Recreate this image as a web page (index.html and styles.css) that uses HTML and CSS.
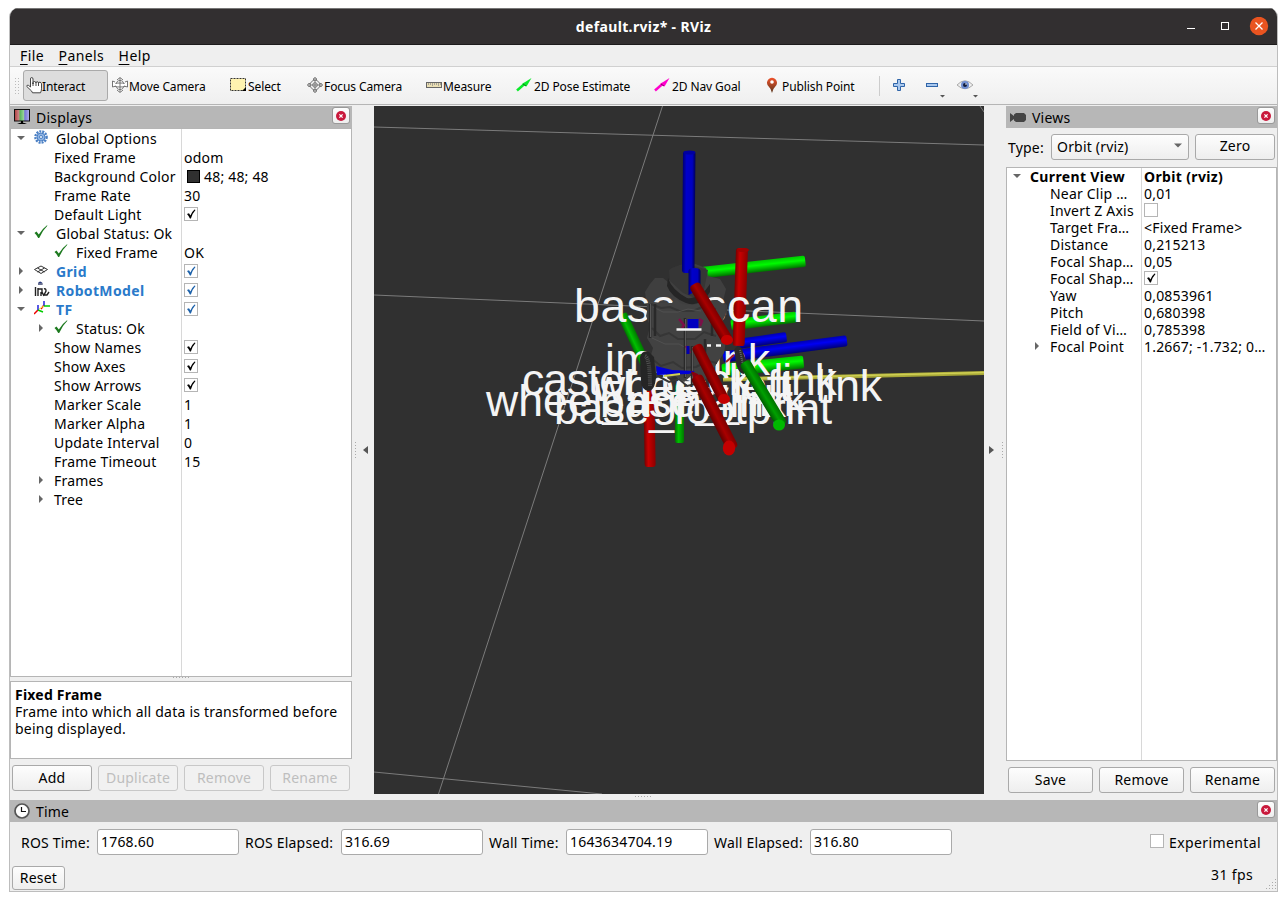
FILE: index.html
```html
<!DOCTYPE html>
<html lang="en">
<head>
<meta charset="utf-8">
<title>default.rviz* - RViz</title>
<link rel="stylesheet" href="styles.css">
</head>
<body>
<svg class="defs" width="0" height="0">
  <defs>
    <symbol id="close" viewBox="0 0 10 10"><circle cx="5" cy="5" r="5" fill="#c9193c"/><path d="M3.4 3.4l3.2 3.2M6.6 3.4L3.4 6.6" stroke="#fff" stroke-width="1.3"/></symbol>
    <symbol id="ok" viewBox="0 0 14 14"><path d="M.5 8L2.500 6.500 4.800 9.600Q8 4 13 .3l.4.5Q8.500 5.500 5.200 13H4.200Q2.800 10 .5 8z" fill="#1d7a1f"/></symbol>
    <symbol id="tick" viewBox="0 0 10 10"><path d="M1 5l2-.8L4.400 6.500Q6 2.500 8.500.5l1 .4Q6.500 4 4.900 9.500H3.900Q2.600 6.500 1 5z" fill="currentColor"/></symbol>
    <linearGradient id="pinfill" x2="0" y2="1"><stop offset="0" stop-color="#f0522b"/><stop offset="1" stop-color="#56351c"/></linearGradient>
    <linearGradient id="screen"><stop offset="0" stop-color="#b33c3c"/><stop offset=".3" stop-color="#c98989"/><stop offset=".36" stop-color="#57b35c"/><stop offset=".63" stop-color="#9ad69c"/><stop offset=".68" stop-color="#7474d8"/><stop offset="1" stop-color="#b2b2ea"/></linearGradient>
  </defs>
</svg>
<div class="window">
  <header class="titlebar">
    <h1>default.rviz* - RViz</h1>
    <svg class="wincontrols" width="88" height="20">
      <path d="M4 11.500h8" stroke="#fff"/><rect x="38.500" y="5.500" width="7" height="7" fill="none" stroke="#fff"/>
      <circle cx="76" cy="9" r="9.200" fill="#e95420"/><path d="M72.500 5.500l7 7M79.500 5.500l-7 7" stroke="#fff" stroke-width="1.300"/>
    </svg>
  </header>
  <nav class="menubar"><span class="m1"><u>F</u>ile</span><span class="m2"><u>P</u>anels</span><span class="m3"><u>H</u>elp</span></nav>
  <div class="toolbar">
    <i class="grip"></i>
    <div class="tool active"><svg width="17" height="17"><path d="M4.500 10V2q0-1.500 1.200-1.500T7 2v5V5.500q.2-1 1.500-1T10 6q0-1.300 1.200-1.300T12.500 6q.2-1 1.500-.8t1.500 1.600v5q0 2-1 4h-8Q6 14 4 12.500L.8 9.500Q.8 7.500 2.500 8.400L4.500 10M7 6v3M10 6v3M12.500 6v3" fill="#fff" stroke="#333" stroke-width=".9"/></svg><span>Interact</span></div>
    <div class="tool t2"><svg width="17" height="17"><g fill="#fff" stroke="#666" stroke-width=".9"><ellipse cx="8" cy="8" rx="3.700" ry="4.500"/><ellipse cx="8" cy="8" rx="7" ry="2"/><path d="M8 1v14M5 3l3-2.500L11 3M5 13l3 2.500 3-2.500M3 5L.5 4v6L4 9M13 5l2.500-1v6L12 9"/></g></svg><span>Move Camera</span></div>
    <div class="tool t3"><svg width="17" height="17"><rect x=".5" y="1.500" width="15" height="12" fill="#fff3b0" stroke="#333" stroke-dasharray="2 1"/><path d="M16 10v4h-4z"/></svg><span>Select</span></div>
    <div class="tool t4"><svg width="17" height="17"><g fill="none" stroke="#777"><circle cx="8" cy="8" r="4.800"/><circle cx="8" cy="8" r="2.300"/><path d="M8 1v14M1 8h14M6.500 3V1.500L8 .5l1.500 1V3M6.500 13v1.500l1.500 1 1.500-1V13M3 6.500H1.500L.5 8l1 1.500H3M13 6.500h1.500l1 1.500-1 1.500H13"/></g></svg><span>Focus Camera</span></div>
    <div class="tool t5"><svg width="17" height="17"><rect x=".5" y="5.500" width="15" height="5" fill="#eadfb4" stroke="#666"/><path d="M2.500 6v2M4.500 6v2M6.500 6v3M8.500 6v2M10.500 6v2M12.500 6v3M14.500 6v2" stroke="#888" stroke-width=".7"/></svg><span>Measure</span></div>
    <div class="tool t6"><svg width="17" height="17"><path d="M1 13.500L9 6.500" stroke="#0bea2b" stroke-width="2.500"/><path d="M6 7l9.500-6-5 8.500z" fill="#0bea2b"/><path d="M7 7l3 2" stroke="#08781b"/></svg><span>2D Pose Estimate</span></div>
    <div class="tool t7"><svg width="17" height="17"><path d="M1 13.500L9 6.500" stroke="#f0c" stroke-width="2.500"/><path d="M6 7l9.500-6-5 8.500z" fill="#f0c"/><path d="M7 7l3 2" stroke="#800568"/></svg><span>2D Nav Goal</span></div>
    <div class="tool t8"><svg width="12" height="17"><path d="M6 16Q5 11.500 1.500 8A5 5 0 1 1 10.500 8Q7 11.500 6 16z" fill="url(#pinfill)"/><circle cx="6" cy="5" r="1.800" fill="#fff"/></svg><span>Publish Point</span></div>
    <svg class="extras" width="110" height="30">
      <path d="M.5 5v20" stroke="#ccc"/><path d="M18.500 8.500h3v4h4v3h-4v4h-3v-4h-4v-3h4z" fill="#a9c8ee" stroke="#2f64a8"/>
      <rect x="47.500" y="12.500" width="11" height="3" fill="#a9c8ee" stroke="#2f64a8"/><path d="M61 24h5l-2.500 2.500zM94 24h5l-2.500 2.500z" fill="#555"/>
      <path d="M78 14Q86 5.500 94 14Q86 21.500 78 14z" fill="#eee" stroke="#aaa"/><circle cx="86" cy="14" r="4" fill="#6e8dd0"/><circle cx="86" cy="14" r="2" fill="#111b3a"/><circle cx="87" cy="13" r=".8" fill="#fff"/>
    </svg>
  </div>
  <main class="workspace">
    <section class="displays">
      <div class="docktitle"><svg width="17" height="17"><rect x=".5" y=".5" width="15" height="11.500" fill="url(#screen)" stroke="#111"/><path d="M7 12h2v2H7zM3 15q5-3 10 0z"/></svg><span>Displays</span><button class="close"><svg width="10" height="10"><use href="#close"/></svg></button></div>
      <div class="tree">
        <div class="row"><div class="name l1"><i class="exp open"></i><svg width="14" height="14"><circle cx="7" cy="7" r="5.600" fill="none" stroke="#4a7fc4" stroke-width="2.400" stroke-dasharray="2 1"/><circle cx="7" cy="7" r="4" fill="#8fb4e3" stroke="#4a7fc4"/><circle cx="7" cy="7" r="1.500" fill="#fff" stroke="#4a7fc4"/></svg><span>Global Options</span></div><div class="value"></div></div>
        <div class="row"><div class="name p">Fixed Frame</div><div class="value">odom</div></div>
        <div class="row"><div class="name p">Background Color</div><div class="value"><i class="swatch"></i>48; 48; 48</div></div>
        <div class="row"><div class="name p">Frame Rate</div><div class="value">30</div></div>
        <div class="row"><div class="name p">Default Light</div><div class="value"><i class="check"><svg width="10" height="10"><use href="#tick"/></svg></i></div></div>
        <div class="row"><div class="name l1"><i class="exp open"></i><svg width="14" height="14"><use href="#ok"/></svg><span>Global Status: Ok</span></div><div class="value"></div></div>
        <div class="row"><div class="name l2"><i class="exp none"></i><svg width="14" height="14"><use href="#ok"/></svg><span>Fixed Frame</span></div><div class="value">OK</div></div>
        <div class="row"><div class="name l1 display"><i class="exp"></i><svg width="14" height="14"><path d="M.5 6.500L7 3l6.500 3.500L7 10.500zM3.500 5l7 4M10.500 5l-7 4" fill="none" stroke="#333"/></svg><span>Grid</span></div><div class="value"><i class="check blue"><svg width="10" height="10"><use href="#tick"/></svg></i></div></div>
        <div class="row"><div class="name l1 display"><i class="exp"></i><svg class="robot" width="16" height="17"><path d="M4 2q2-3 4.500 0v2H4z" fill="#28397c"/><path d="M4 3h5" stroke="#aaa"/><path d="M1.500 6v9M4 7v8M4 8h4v3l2 4M7 15v-4M10 8q2-1 2 2l-2 4h3l2-3" fill="none" stroke="#222" stroke-width="1.400"/></svg><span>RobotModel</span></div><div class="value"><i class="check blue"><svg width="10" height="10"><use href="#tick"/></svg></i></div></div>
        <div class="row"><div class="name l1 display"><i class="exp open"></i><svg class="robot" width="16" height="16"><path d="M0 14l4-4M7 9l3-4" stroke="#e00" stroke-width="1.500"/><path d="M4 10V5M10 6V1" stroke="#22d" stroke-width="1.500"/><path d="M4 10l5 2M10 6h6" stroke="#0c0" stroke-width="1.500"/><path d="M5 9l5-3" stroke="#ee4"/></svg><span>TF</span></div><div class="value"><i class="check blue"><svg width="10" height="10"><use href="#tick"/></svg></i></div></div>
        <div class="row"><div class="name l2"><i class="exp"></i><svg width="14" height="14"><use href="#ok"/></svg><span>Status: Ok</span></div><div class="value"></div></div>
        <div class="row"><div class="name p">Show Names</div><div class="value"><i class="check"><svg width="10" height="10"><use href="#tick"/></svg></i></div></div>
        <div class="row"><div class="name p">Show Axes</div><div class="value"><i class="check"><svg width="10" height="10"><use href="#tick"/></svg></i></div></div>
        <div class="row"><div class="name p">Show Arrows</div><div class="value"><i class="check"><svg width="10" height="10"><use href="#tick"/></svg></i></div></div>
        <div class="row"><div class="name p">Marker Scale</div><div class="value">1</div></div>
        <div class="row"><div class="name p">Marker Alpha</div><div class="value">1</div></div>
        <div class="row"><div class="name p">Update Interval</div><div class="value">0</div></div>
        <div class="row"><div class="name p">Frame Timeout</div><div class="value">15</div></div>
        <div class="row"><div class="name l2 plain"><i class="exp"></i><span>Frames</span></div><div class="value"></div></div>
        <div class="row"><div class="name l2 plain"><i class="exp"></i><span>Tree</span></div><div class="value"></div></div>
        <div class="row fill"><div class="name"></div></div>
      </div>
      <div class="hsplit"><i></i></div>
      <div class="description"><b>Fixed Frame</b><br>Frame into which all data is transformed before<br>being displayed.</div>
      <div class="buttons"><button>Add</button><button disabled>Duplicate</button><button disabled>Remove</button><button disabled>Rename</button></div>
    </section>
    <div class="vsplit"><i class="dots"></i><i class="arrow left"></i></div>
    <svg class="viewport" width="610" height="688" viewBox="374 106 610 688">
      <defs>
        <linearGradient id="blueV"><stop offset="0" stop-color="#000070"/><stop offset=".3" stop-color="#0000cb"/><stop offset=".75" stop-color="#0000c0"/><stop offset="1" stop-color="#000058"/></linearGradient>
        <linearGradient id="redV"><stop offset="0" stop-color="#780000"/><stop offset=".35" stop-color="#c80000"/><stop offset="1" stop-color="#8b0000"/></linearGradient>
        <linearGradient id="redArm"><stop offset="0" stop-color="#640000"/><stop offset=".5" stop-color="#a80000"/><stop offset="1" stop-color="#7c0000"/></linearGradient>
        <linearGradient id="greenV"><stop offset="0" stop-color="#007000"/><stop offset=".4" stop-color="#00c000"/><stop offset="1" stop-color="#007800"/></linearGradient>
        <linearGradient id="greenArm"><stop offset="0" stop-color="#005c00"/><stop offset=".5" stop-color="#00a000"/><stop offset="1" stop-color="#007000"/></linearGradient>
        <linearGradient id="greenH" x2="0" y2="1"><stop offset="0" stop-color="#00c800"/><stop offset=".4" stop-color="#00fa00"/><stop offset="1" stop-color="#007000"/></linearGradient>
        <linearGradient id="blueH" x2="0" y2="1"><stop offset="0" stop-color="#0000b0"/><stop offset=".4" stop-color="#0000f4"/><stop offset="1" stop-color="#000078"/></linearGradient>
      </defs>
      <rect x="374" y="106" width="610" height="688" fill="#303030"/>
      <g fill="none" stroke="#838383" stroke-width=".9"><path d="M374 127L984 145M374 295L984 321M662.500 106L438.500 794M374 772L602 794M980 106l4 6"/></g>
      <g>
        <rect x="0" y="-6" width="104" height="11.500" rx="2" fill="url(#greenH)" transform="translate(702 273) rotate(-6.400)"/>
        <rect x="0" y="-5.500" width="66" height="11" rx="2" fill="url(#greenH)" transform="translate(731 325) rotate(-7)"/>
        <rect x="0" y="-5" width="50" height="10" rx="2" fill="url(#blueH)" transform="translate(737 344) rotate(-8)"/>
        <rect x="0" y="-5.500" width="125" height="11" rx="2" fill="url(#blueH)" transform="translate(723 357) rotate(-7.500)"/>
        <rect x="0" y="-6" width="82" height="13" rx="2" fill="url(#greenH)" transform="translate(722 370) rotate(-6)"/>
        <path d="M723 379.500L984 373" stroke="#a8a838" stroke-width="4"/><path d="M723 379L984 372.500" stroke="#cece52" stroke-width="1.500"/>
        <rect x="675" y="384" width="9" height="59" rx="2" fill="url(#greenV)"/>
        <rect x="643" y="370" width="11" height="97" rx="3" fill="url(#redV)" transform="rotate(-1 649 370)"/>
        <rect x="-5" y="0" width="10" height="70" rx="2" fill="url(#greenV)" transform="translate(622 314) rotate(-25)"/>
        <rect x="736" y="248" width="12" height="98" rx="3" fill="url(#redV)" transform="rotate(2 742 248)"/><ellipse cx="743" cy="250" rx="6" ry="2" fill="#a00000"/>
      </g>
      <path d="M645 292l5-8 5-6h8l5 4 5-7 5-9 12-4 16 6 2 8 12 3 6 10-3 12 4 4v10h-79z" fill="#3f3f3f"/>
      <path d="M669 270q9-7 25-4l14 4-4 20-9 8-12-5-13-12z" fill="#363636"/><path d="M668 278q4 12 19 20 13 2 23-14v8q-9 16-24 11-15-6-19-17z" fill="#252525"/>
      <g class="labels">
        <text class="scan" x="574" y="322" textLength="229">base_scan</text>
        <text x="605" y="375" textLength="165">imu_link</text>
        <text x="522" y="395" textLength="315">caster_back_link</text>
        <text x="593" y="401" textLength="289">wheel_left_link</text>
        <text x="486" y="416" textLength="320">wheel_right_link</text>
        <text x="600" y="417" textLength="186">base_link</text>
        <text x="554" y="424" textLength="278">base_footprint</text>
      </g>
      <g>
        <path d="M648 302h6l8 1h10l3-5 7 6 12 1 10-4 13-1 8 5v11l-4 8v10l5 7-2 12-7 10-9 15-9 4-8-6-7 6-9-6-7 3-4-8-9 1-6-10 4-14-6-10 3-12-4-10 3-13z" fill="#424242"/>
        <path d="M651 304l10 4 9-1 9 4h14l9-4 14 2M652 328l8 8 9-3 9 6h17l9-7 12 4M651 358l10 8 12-4 9 6 14-1 12-6 9 2M656 375l13 7 10-3 8 7 13-3 12-7" fill="none" stroke="#363636" stroke-width="2"/>
        <path d="M653 307l10 5h15l10-3 13 2M652 338l13 6h14l9 5" fill="none" stroke="#505050"/>
        <path d="M685 318v60M692 346v39M650 304v34M655 304v32M712 306v30M705 339v28" stroke="#292929" stroke-width="2.500"/><path d="M685.500 319v58M692.500 347v37M650.500 304v33" stroke="#585858"/>
        <path d="M679 319l5 6-2 3M686 346l4 7M699 319l3 2-2 5" fill="none" stroke="#7c1048" stroke-width="2.500"/>
        <path d="M693 319v10" stroke="#0000c0" stroke-width="11"/><path d="M688 346v8" stroke="#0000b0" stroke-width="3"/>
        <path d="M656 366l16 4 23 1-6 3-32 1z" fill="#0000d5"/><path d="M664 376l16-2" stroke="#d0d052" stroke-width="2"/>
        <path d="M640 357q2-7 9-5l5 5 2 20q-1 14-8 14-7-2-7-10z" fill="#252525"/><path d="M645 356q5 2 5 31" stroke="#505050" stroke-width="4" stroke-dasharray="1 1" fill="none"/>
        <path d="M734 350q6-10 10 5l4 11-4 8q-8-1-9-20" fill="#292929"/><path d="M740 350l4 20" stroke="#666" stroke-width="2" stroke-dasharray="1 1"/>
        <path d="M726 362l8-7" stroke="#a52020" stroke-width="2"/>
      </g>
      <path d="M676.500 329.500h25M707 345.500h4M716 345.500h5" stroke="#f4f4f4" stroke-width="2.500"/>
      <g>
        <rect x="683" y="151" width="12.500" height="122" rx="3" fill="url(#blueV)" transform="rotate(.5 689 151)"/><ellipse cx="689.500" cy="152.500" rx="6" ry="2" fill="#0000a0"/>
        <path d="M688.500 271q0-3 6-3t6 3v18l-12 6z" fill="url(#blueV)"/>
        <rect x="-6" y="0" width="11.500" height="67" rx="4" fill="url(#redArm)" transform="translate(694 284) rotate(-31)"/><ellipse cx="727" cy="340" rx="6" ry="5" fill="#c40000"/>
        <rect x="-5.500" y="0" width="11" height="62" rx="4" fill="url(#redArm)" transform="translate(696 345) rotate(-27)"/><ellipse cx="724" cy="399" rx="6" ry="5" fill="#c40000"/>
        <path d="M691 371l7 3 11 27-13-15z" fill="#88000c"/>
        <rect x="-6" y="0" width="12" height="82" rx="4" fill="url(#redArm)" transform="translate(696 376) rotate(-27)"/><ellipse cx="729" cy="448" rx="6.200" ry="7.500" fill="#c40000"/>
        <rect x="-5.500" y="0" width="11.500" height="74" rx="4" fill="url(#greenArm)" transform="translate(744 362) rotate(-31)"/><ellipse cx="779" cy="425" rx="6" ry="5.500" fill="#00b900"/>
      </g>
    </svg>
    <div class="vsplit right"><i class="arrow"></i><i class="dots"></i></div>
    <section class="views">
      <div class="docktitle"><svg width="17" height="17"><path d="M0 4l4 3V5.500L6 4h8l2 2v5l-2 2H6l-2-1.500V10l-4 3z" fill="#444"/></svg><span>Views</span><button class="close"><svg width="10" height="10"><use href="#close"/></svg></button></div>
      <div class="typebar"><label>Type:</label><button class="combo">Orbit (rviz)<i class="exp open"></i></button><button class="zero">Zero</button></div>
      <div class="tree">
        <div class="row head"><div class="name v1"><i class="exp open"></i><span>Current View</span></div><div class="value">Orbit (rviz)</div></div>
        <div class="row"><div class="name v2">Near Clip …</div><div class="value">0,01</div></div>
        <div class="row"><div class="name v2">Invert Z Axis</div><div class="value"><i class="check"></i></div></div>
        <div class="row"><div class="name v2">Target Fra…</div><div class="value">&lt;Fixed Frame&gt;</div></div>
        <div class="row"><div class="name v2">Distance</div><div class="value">0,215213</div></div>
        <div class="row"><div class="name v2">Focal Shap…</div><div class="value">0,05</div></div>
        <div class="row"><div class="name v2">Focal Shap…</div><div class="value"><i class="check"><svg width="10" height="10"><use href="#tick"/></svg></i></div></div>
        <div class="row"><div class="name v2">Yaw</div><div class="value">0,0853961</div></div>
        <div class="row"><div class="name v2">Pitch</div><div class="value">0,680398</div></div>
        <div class="row"><div class="name v2">Field of Vi…</div><div class="value">0,785398</div></div>
        <div class="row"><div class="name v2 sub"><i class="exp"></i>Focal Point</div><div class="value">1.2667; -1.732; 0…</div></div>
        <div class="row fill"><div class="name"></div></div>
      </div>
      <div class="buttons"><button>Save</button><button>Remove</button><button>Rename</button></div>
    </section>
  </main>
  <div class="dockgap"><i></i></div>
  <footer class="time">
    <div class="docktitle"><svg width="17" height="17"><circle cx="8" cy="8" r="7" fill="#fff" stroke="#555" stroke-width="1.700"/><path d="M7.500 4v4.500H12" fill="none" stroke="#111" stroke-width="1.200"/></svg><span>Time</span><button class="close"><svg width="10" height="10"><use href="#close"/></svg></button></div>
    <div class="fields"><label class="f1">ROS Time:</label><div class="input">1768.60</div><label class="f2">ROS Elapsed:</label><div class="input">316.69</div><label class="f3">Wall Time:</label><div class="input">1643634704.19</div><label class="f4">Wall Elapsed:</label><div class="input">316.80</div><div class="experimental"><i class="check"></i><span>Experimental</span></div></div>
    <div class="status"><button>Reset</button><span>31 fps</span><svg width="12" height="12"><path d="M10.500 0v12M7.500 3v9M4.500 6v6M1.500 9v3" stroke="#aaa" stroke-dasharray="1 2"/></svg></div>
  </footer>
</div>
</body>
</html>
```
FILE: styles.css
```css
* { box-sizing: border-box; }
body { margin: 0; padding: 8px 9px; height: 901px; overflow: hidden; background: #fff; color: #000; font: 14px/17px "Noto Sans", sans-serif; letter-spacing: .2px; }
svg { display: block; flex: none; }
.defs { position: absolute; }
i { display: block; flex: none; font-style: normal; }
span, label { white-space: nowrap; }
button { font: inherit; letter-spacing: inherit; color: #000; padding: 0 0 2px; height: 26px; border: 1px solid #a9a9a9; border-radius: 3px; background: linear-gradient(#fdfdfd, #eee); white-space: nowrap; }
button:disabled { color: #bebebe; border-color: #c8c8c8; background: #f1f1f1; }
.window { width: 1269px; height: 884px; display: flex; flex-direction: column; background: #efefef; border: 1px solid #bdbdbd; border-top: 0; border-radius: 9px 9px 0 0; overflow: hidden; }
.titlebar { height: 37px; flex: none; background: #322f30; border-bottom: 1px solid #1d1b1c; border-top: 1px solid #777; display: grid; grid-template-columns: 1fr auto 1fr; align-items: center; color: #fff; }
.titlebar h1 { grid-column: 2; margin: 0; font-size: 14px; line-height: 17px; font-weight: 700; width: 137px; text-align: center; white-space: nowrap; letter-spacing: .35px; }
.wincontrols { justify-self: end; margin-right: 6px; }
.menubar { height: 22px; flex: none; border-bottom: 1px solid #d0d0d0; display: flex; padding: 2px 0 0 10px; }
.menubar span { margin-right: 14.500px; letter-spacing: .4px; }
.menubar u { text-underline-offset: 3px; }
.toolbar { height: 38px; flex: none; border-bottom: 1px solid #b5b5b5; display: flex; align-items: center; background: linear-gradient(#fafafa, #efefef); font-size: 12px; padding-left: 4px; letter-spacing: -.1px; }
.tool span { padding-top: 2px; }
.grip { width: 6px; height: 18px; background: radial-gradient(#bbb 35%, transparent 40%) 0 0 / 3px 3px; }
.tool { height: 31px; display: flex; align-items: center; gap: 1px; padding-left: 3px; flex: none; }
.active { width: 85px; margin-left: 3px; border: 1px solid #aaa; border-radius: 3px; background: #ddd; padding-left: 2px; gap: 0; }
.active span { margin-left: -1px; }
.t2 { width: 118px; padding-left: 4px; gap: 0; }
.t3 { width: 77px; padding-left: 4px; }
.t4 { width: 119px; padding-left: 4px; gap: 0; }
.t5 { width: 90px; padding-left: 4px; gap: 0; }
.t6 { width: 138px; padding-left: 4px; }
.t7 { width: 112px; padding-left: 4px; }
.t8 { width: 117px; padding-left: 4px; gap: 4px; }
.extras { margin-top: 1px; }
.workspace { height: 689px; flex: none; display: flex; padding-top: 1px; }
.displays { width: 342px; flex: none; display: flex; flex-direction: column; }
.docktitle { height: 22px; flex: none; background: #b7b7b7; display: flex; align-items: center; padding-left: 4px; gap: 5px; }
.docktitle span { flex: 1; padding-top: 1px; }
.docktitle .close { width: 18px; height: 17px; padding: 0; margin: -3px 2px 0 0; display: grid; place-items: center; border-color: #999; }
.tree { background: #fff; border: 1px solid #b5b5b5; display: flex; flex-direction: column; overflow: hidden; }
.displays .tree { height: 549px; }
.row { display: flex; flex: none; height: 19px; line-height: 19px; }
.row.fill { flex: 1; height: auto; }
.name { width: 171px; flex: none; border-right: 1px solid #d8d8d8; display: flex; align-items: center; white-space: nowrap; }
.value { flex: 1; display: flex; align-items: center; padding-left: 2px; white-space: nowrap; }
.p { padding-left: 43px; }
.l1 { padding-left: 6px; gap: 10px; }
.l2 { padding-left: 26px; gap: 10px; }
.l1 span, .l2 span { margin-left: -3px; }
.l1 > svg, .l2 > svg { margin: -3px 0 0 -1px; }
.l1 > svg { margin-right: 1px; }
.l2 > svg { margin-right: 1px; }
.l1 > .robot { margin-right: -1px; }
.plain { gap: 12px; }
.display { color: #2a7aca; font-weight: 700; letter-spacing: .35px; }
.exp { width: 8px; height: 8px; margin-top: -1px; background: #666; clip-path: polygon(25% 0, 75% 50%, 25% 100%); }
.exp.open { clip-path: polygon(0 25%, 100% 25%, 50% 75%); }
.exp.none { visibility: hidden; }
.swatch { width: 13px; height: 13px; border: 1px solid #000; background: #303030; margin: -1px 4px 0 3px; }
.check { width: 14px; height: 14px; border: 1px solid #b5b5b5; background: #fff; padding: 1px; margin-top: -1px; color: #000; }
.blue { color: #1c61aa; }
.hsplit, .dockgap { height: 4px; flex: none; display: grid; place-items: center; }
.hsplit i, .dockgap i { width: 17px; height: 1px; background: repeating-linear-gradient(90deg, #aaa 0 1px, transparent 1px 3px); }
.hsplit { align-items: start; }
.dockgap { height: 6px; align-items: start; padding-top: 2px; }
.description { height: 78px; flex: none; background: #fff; border: 1px solid #b5b5b5; padding: 4px; white-space: nowrap; letter-spacing: .22px; }
.buttons { display: flex; gap: 6px; padding: 6px 2px 0; }
.buttons button { flex: 1; }
.vsplit { width: 22px; flex: none; display: flex; align-items: center; gap: 7px; padding-left: 3px; }
.dots { width: 1px; height: 17px; background: repeating-linear-gradient(#aaa 0 1px, transparent 1px 3px); }
.arrow { width: 5px; height: 8px; background: #555; clip-path: polygon(0 0, 100% 50%, 0 100%); }
.arrow.left { clip-path: polygon(100% 0, 0 50%, 100% 100%); }
.vsplit.right { padding-left: 5px; gap: 8px; }
.labels text { font-family: "Liberation Sans", Arial, sans-serif; font-size: 44.500px; letter-spacing: 0; fill: #f4f4f4; }
.labels .scan { font-size: 46.500px; }
.views { width: 271px; flex: none; display: flex; flex-direction: column; }
.typebar { height: 39px; display: flex; align-items: center; padding: 0 2px 2px; }
.typebar label { width: 43px; padding-top: 1px; }
.combo { width: 138px; display: flex; align-items: center; justify-content: space-between; padding: 0 6px 1px 5px; margin-right: 6px; }
.zero { width: 80px; }
.views .tree { height: 594px; }
.views .row { height: 17px; line-height: 17px; }
.views .row.fill { height: auto; }
.views .head { font-weight: 700; letter-spacing: .35px; }
.views .name { width: 135px; }
.v1 { padding-left: 6px; gap: 9px; }
.v2 { padding-left: 43px; }
.v2.sub { padding-left: 26px; gap: 9px; }
.time .fields { height: 39px; display: flex; align-items: center; }
.time label, .experimental span { padding-top: 1px; }
.input { width: 142px; height: 26px; border: 1px solid #aaa; border-radius: 3px; background: #fff; padding: 3px; line-height: 18px; }
.f1 { width: 76px; margin-left: 11px; }
.f2 { width: 96px; margin-left: 6px; }
.f3 { width: 77px; margin-left: 6px; }
.f4 { width: 96px; margin-left: 6px; }
.experimental { display: flex; gap: 5px; margin-left: auto; width: 127px; align-items: center; letter-spacing: .4px; }
.status { height: 30px; display: flex; align-items: center; padding-left: 2px; }
.status button { width: 53px; height: 24px; margin-top: 3px; padding: 0; }
.status span { margin: -4px 0 0 auto; width: 54px; letter-spacing: .4px; }
.status svg { align-self: end; }
```
